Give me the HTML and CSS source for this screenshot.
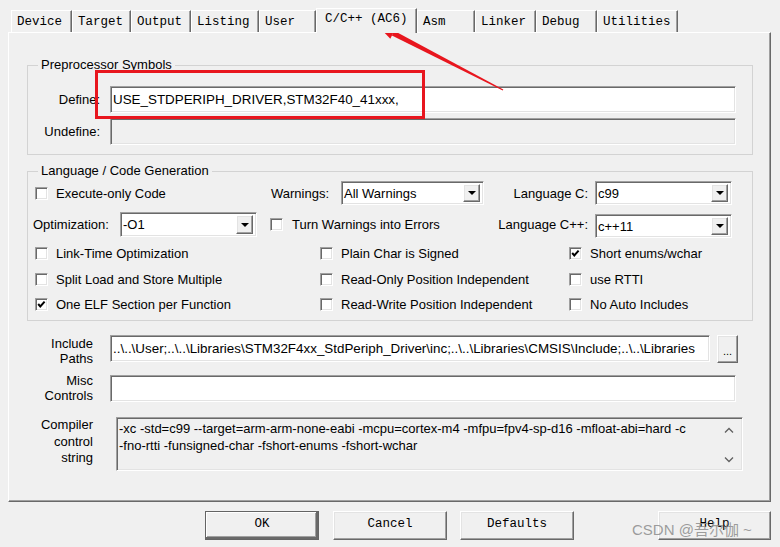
FILE: index.html
```html
<!DOCTYPE html>
<html>
<head>
<meta charset="utf-8">
<title>Options</title>
<link rel="stylesheet" href="styles.css">
</head>
<body>
<div class="window">
  <div class="tabs">
    <div class="tab t-device">Device</div>
    <div class="tab t-target">Target</div>
    <div class="tab t-output">Output</div>
    <div class="tab t-listing">Listing</div>
    <div class="tab t-user">User</div>
    <div class="tab active t-cc">C/C++ (AC6)</div>
    <div class="tab t-asm">Asm</div>
    <div class="tab t-linker">Linker</div>
    <div class="tab t-debug">Debug</div>
    <div class="tab t-util">Utilities</div>
  </div>

  <div class="panel">
    <fieldset class="group pre">
      <legend>Preprocessor Symbols</legend>
      <div class="field-row">
        <span class="flabel">Define:</span>
        <div class="edit sunken">USE_STDPERIPH_DRIVER,STM32F40_41xxx,</div>
      </div>
      <div class="field-row second">
        <span class="flabel">Undefine:</span>
        <div class="edit sunken disabled"></div>
      </div>
    </fieldset>

    <fieldset class="group lang">
      <legend>Language / Code Generation</legend>
      <div class="lrow r1">
        <div class="chk c1"><span class="cb"></span>Execute-only Code</div>
        <span class="warn-label">Warnings:</span>
        <div class="combo sunken w143"><span class="ctext">All Warnings</span><span class="drop"><span class="tri"></span></span></div>
        <span class="rlabel w104">Language C:</span>
        <div class="combo sunken w137"><span class="ctext">c99</span><span class="drop"><span class="tri"></span></span></div>
      </div>
      <div class="lrow r2">
        <span class="opt-label">Optimization:</span>
        <div class="combo sunken w137 h25"><span class="ctext">-O1</span><span class="drop"><span class="tri"></span></span></div>
        <div class="chk c2b"><span class="cb"></span>Turn Warnings into Errors</div>
        <span class="rlabel w98">Language C++:</span>
        <div class="combo sunken w137 low"><span class="ctext">c++11</span><span class="drop"><span class="tri"></span></span></div>
      </div>
      <div class="lrow r3">
        <div class="chk c1w"><span class="cb"></span>Link-Time Optimization</div>
        <div class="chk c2w"><span class="cb"></span>Plain Char is Signed</div>
        <div class="chk"><span class="cb checked"><svg viewBox="0 0 11 11" width="11" height="11"><polyline points="2.2,5 4.3,7.4 8.6,2.6" fill="none" stroke="#000" stroke-width="2"/></svg></span>Short enums/wchar</div>
      </div>
      <div class="lrow r4">
        <div class="chk c1w"><span class="cb"></span>Split Load and Store Multiple</div>
        <div class="chk c2w"><span class="cb"></span>Read-Only Position Independent</div>
        <div class="chk"><span class="cb"></span>use RTTI</div>
      </div>
      <div class="lrow r5">
        <div class="chk c1w"><span class="cb checked"><svg viewBox="0 0 11 11" width="11" height="11"><polyline points="2.2,5 4.3,7.4 8.6,2.6" fill="none" stroke="#000" stroke-width="2"/></svg></span>One ELF Section per Function</div>
        <div class="chk c2w"><span class="cb"></span>Read-Write Position Independent</div>
        <div class="chk"><span class="cb"></span>No Auto Includes</div>
      </div>
    </fieldset>

    <div class="paths">
      <div class="prow include">
        <div class="plabel">Include<br>Paths</div>
        <div class="edit sunken w600"><span class="clip">..\..\User;..\..\Libraries\STM32F4xx_StdPeriph_Driver\inc;..\..\Libraries\CMSIS\Include;..\..\Libraries</span></div>
        <div class="btn small">...</div>
      </div>
      <div class="prow misc">
        <div class="plabel">Misc<br>Controls</div>
        <div class="edit sunken w626"></div>
      </div>
      <div class="prow compiler">
        <div class="plabel tall">Compiler<br>control<br>string</div>
        <div class="memo sunken">
          <div class="memo-text">
            <div>-xc -std=c99 --target=arm-arm-none-eabi -mcpu=cortex-m4 -mfpu=fpv4-sp-d16 -mfloat-abi=hard -c</div>
            <div>-fno-rtti -funsigned-char -fshort-enums -fshort-wchar</div>
          </div>
          <div class="vscroll">
            <svg width="10" height="7" viewBox="0 0 10 7"><polyline points="1,5.5 5,1.5 9,5.5" fill="none" stroke="#606060" stroke-width="1.3"/></svg>
            <svg width="10" height="7" viewBox="0 0 10 7"><polyline points="1,1.5 5,5.5 9,1.5" fill="none" stroke="#606060" stroke-width="1.3"/></svg>
          </div>
        </div>
      </div>
    </div>
  </div>

  <div class="buttons">
    <div class="btn default">OK</div>
    <div class="btn b-cancel">Cancel</div>
    <div class="btn b-defaults">Defaults</div>
    <div class="btn b-help">Help</div>
  </div>

  <div class="watermark">CSDN @吾尔伽 ~</div>

  <svg class="annot" width="780" height="547" viewBox="0 0 780 547">
    <rect x="96.5" y="71.5" width="327" height="46" fill="none" stroke="#e8161e" stroke-width="3"/>
    <polygon points="391.9,35.6 502.7,90.6 503.3,89.4 394.1,30.8" fill="#e8161e"/>
    <polygon points="376,24 390.3,38.8 396,27.6" fill="#e8161e"/>
  </svg>
</div>
</body>
</html>
```

FILE: styles.css
```css
* { box-sizing: border-box; }

html, body {
  margin: 0;
  padding: 0;
}

body {
  width: 780px;
  height: 547px;
  overflow: hidden;
  background: #f0f0f0;
  color: #000;
  font-family: "Liberation Sans", Arial, sans-serif;
  font-size: 13px;
}

.window {
  position: relative;
  width: 780px;
  height: 547px;
  padding-top: 8px;
}

/* ---------- tabs ---------- */
.tabs {
  display: flex;
  align-items: flex-start;
  height: 24px;
  margin-left: 11px;
  position: relative;
  z-index: 2;
}

.tab {
  height: 22px;
  margin-top: 2px;
  padding: 2px 0 0 5px;
  border-top: 1px solid #fff;
  border-left: 1px solid #fff;
  border-right: 1px solid #696969;
  box-shadow: inset -1px 0 #a0a0a0;
  background: #f0f0f0;
  font-family: "Liberation Mono", "Courier New", monospace;
  font-size: 12.5px;
  line-height: 18px;
  white-space: nowrap;
}

.tab.active {
  height: 25px;
  margin-top: 0;
  padding: 1px 0 0 8px;
}

.t-device { width: 61px; }
.t-target { width: 59px; }
.t-output { width: 60px; }
.t-listing { width: 68px; }
.t-user { width: 57px; }
.t-cc { width: 101px; }
.t-asm { width: 58px; }
.t-linker { width: 61px; }
.t-debug { width: 61px; }
.t-util { width: 81px; }

/* ---------- panel ---------- */
.panel {
  margin-left: 8px;
  width: 763px;
  height: 470px;
  border-top: 1px solid #fff;
  border-left: 1px solid #fff;
  border-right: 1px solid #696969;
  border-bottom: 1px solid #696969;
  box-shadow: inset -1px -1px #a0a0a0;
}

.group {
  margin: 0 17px 0 18px;
  padding: 0;
  border: 1px solid #d3d3d3;
  min-width: 0;
}

.group legend {
  margin-left: 10px;
  padding: 0 3px;
  line-height: 16px;
}

.pre {
  margin-top: 24px;
  padding: 13px 0 9px 0;
}

.field-row {
  display: flex;
  align-items: center;
  height: 27px;
}

.field-row.second { margin-top: 5px; }

.flabel {
  width: 72px;
  margin-right: 10px;
  text-align: right;
}

/* sunken edit look */
.sunken {
  background: #fff;
  border: 1px solid;
  border-color: #a0a0a0 #fff #fff #a0a0a0;
  box-shadow: inset 1px 1px #696969, inset -1px -1px #e3e3e3;
}

.edit {
  width: 626px;
  height: 27px;
  padding: 0 0 0 2px;
  font-size: 13.4px;
  line-height: 25px;
  white-space: nowrap;
  overflow: hidden;
}

.edit.disabled { background: #f0f0f0; }
.edit.w600 { width: 600px; }
.edit.w626 { width: 626px; }

.clip { display: block; overflow: hidden; }

/* ---------- language group ---------- */
.lang {
  margin-top: 8px;
  padding: 1px 0 4px 0;
}

.lrow {
  display: flex;
  align-items: center;
}

.r1 { height: 26px; }
.r2 { height: 27px; margin-top: 5px; }
.r3 { height: 24px; margin-top: 3px; }
.r4 { height: 24px; margin-top: 2px; }
.r5 { height: 24px; margin-top: 1px; }

.chk {
  display: flex;
  align-items: center;
  white-space: nowrap;
}

.cb {
  flex: none;
  width: 13px;
  height: 13px;
  margin-right: 8px;
  background: #fff;
  border: 1px solid;
  border-color: #a0a0a0 #fff #fff #a0a0a0;
  box-shadow: inset 1px 1px #696969, inset -1px -1px #e3e3e3;
  display: flex;
}

.cb svg { display: block; }

.c1 { width: 242px; padding-left: 7px; }
.c1w { width: 292px; padding-left: 7px; }
.c2w { width: 249px; }
.c2b { width: 233px; padding-left: 13px; }
.c2b .cb { margin-right: 9px; }

.warn-label {
  width: 71px;
  padding-left: 1px;
}

.opt-label {
  width: 92px;
  padding-left: 5px;
}

.rlabel {
  margin-right: 7px;
  text-align: right;
}

.w104 { width: 104px; }
.w98 { width: 98px; }

.combo {
  display: flex;
  height: 24px;
  padding: 2px 3px 2px 2px;
}

.combo.h25 { height: 25px; }
.combo.low { align-self: flex-end; }
.w143 { width: 143px; }
.w137 { width: 137px; }

.ctext {
  flex: 1;
  line-height: 20px;
  white-space: nowrap;
}

.drop {
  width: 17px;
  background: #f0f0f0;
  border: 1px solid;
  border-color: #fff #696969 #696969 #fff;
  box-shadow: inset -1px -1px #a0a0a0, inset 1px 1px #e3e3e3;
  display: flex;
  align-items: center;
  justify-content: center;
}

.tri {
  width: 0;
  height: 0;
  border-left: 4px solid transparent;
  border-right: 4px solid transparent;
  border-top: 4px solid #000;
}

/* ---------- paths ---------- */
.paths {
  padding-top: 14px;
}

.prow {
  display: flex;
  align-items: flex-start;
}

.prow.include { height: 28px; }
.prow.misc { height: 27px; margin-top: 12px; }
.prow.compiler { height: 54px; margin-top: 15px; }

.plabel {
  width: 84px;
  margin-right: 17px;
  text-align: right;
  line-height: 15px;
}

.include .plabel { margin-top: 1px; }
.misc .plabel { margin-top: -2px; }
.plabel.tall { line-height: 16.5px; margin-top: 0; }

.btn {
  display: flex;
  align-items: center;
  justify-content: center;
  background: #f0f0f0;
  border: 1px solid;
  border-color: #fff #696969 #696969 #fff;
  box-shadow: inset -1px -1px #a0a0a0, inset 1px 1px #e3e3e3;
  font-family: "Liberation Mono", "Courier New", monospace;
  font-size: 12.5px;
}

.btn.small {
  width: 21px;
  height: 28px;
  margin-left: 7px;
  font-family: "Liberation Sans", Arial, sans-serif;
  font-size: 11px;
  padding-top: 3px;
}

.memo {
  display: flex;
  width: 627px;
  height: 54px;
  margin-left: 6px;
  background: #f0f0f0;
}

.memo-text {
  flex: 1;
  padding: 2px 0 0 2px;
  line-height: 17px;
  white-space: nowrap;
  overflow: hidden;
}

.vscroll {
  width: 22px;
  display: flex;
  flex-direction: column;
  align-items: center;
  justify-content: space-between;
  padding: 9px 4px 7px 0;
}

.vscroll svg { display: block; }

/* ---------- buttons ---------- */
.buttons {
  display: flex;
  margin-top: 9px;
  padding-left: 205px;
}

.buttons .btn {
  width: 114px;
  height: 29px;
  padding-bottom: 3px;
}

.btn.default {
  border-color: #646464;
  box-shadow: inset -2px -2px #696969, inset 1px 1px #fff, inset -3px -3px #a0a0a0;
}

.b-cancel { margin-left: 14px; }
.b-defaults { margin-left: 13px; }
.buttons .b-help { margin-left: 84px; width: 113px; }

/* ---------- overlays ---------- */
.watermark {
  position: absolute;
  left: 632px;
  top: 518px;
  font-family: "Liberation Sans", "Noto Sans CJK SC", sans-serif;
  font-size: 15px;
  color: rgba(140, 140, 140, 0.85);
  white-space: nowrap;
  pointer-events: none;
}

.annot {
  position: absolute;
  left: 0;
  top: 0;
  pointer-events: none;
}
```
